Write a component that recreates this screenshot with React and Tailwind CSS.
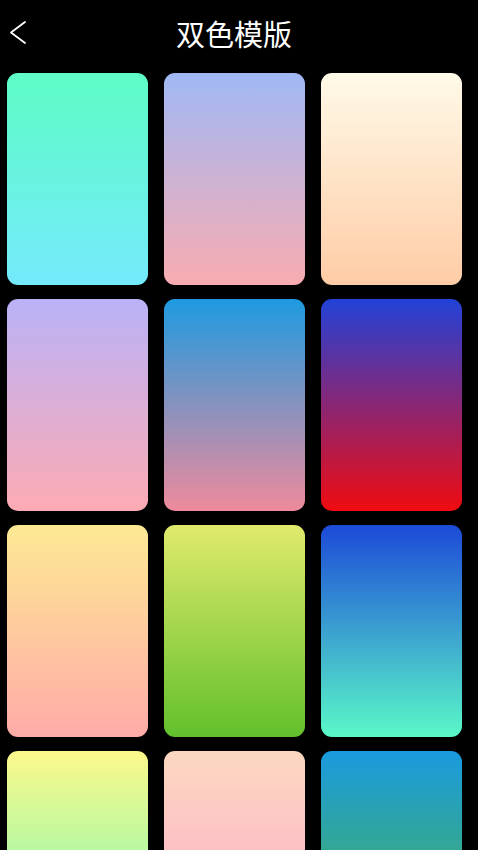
const cards = [
  "bg-[linear-gradient(to_bottom,#5efdc6,#74e9fb)]",
  "bg-[linear-gradient(to_bottom,#a0b8f5,#f9acb1)]",
  "bg-[linear-gradient(to_bottom,#fffae8,#ffcca6)]",
  "bg-[linear-gradient(to_bottom,#bab2f8,#fdabb3)]",
  "bg-[linear-gradient(to_bottom,#1e9ae0,#ef8a9c)]",
  "bg-[linear-gradient(to_bottom,#2242d8,#f00b10)]",
  "bg-[linear-gradient(to_bottom,#fde994,#ffaba8)]",
  "bg-[linear-gradient(to_bottom,#e0ea6c,#62c02c)]",
  "bg-[linear-gradient(to_bottom,#1c4ad8,#5af8c8)]",
  "bg-[linear-gradient(to_bottom,#fcf98a,#6ef7bc)]",
  "bg-[linear-gradient(to_bottom,#fcd8c0,#fda6cc)]",
  "bg-[linear-gradient(to_bottom,#1a9adf,#50b640)]",
];

export default function App() {
  return (
    <div className="min-h-screen bg-black font-['Noto_Sans_CJK_SC',sans-serif]">
      <header className="relative h-[66px] flex items-center justify-center">
        <button className="absolute left-[8px] top-[19px] p-0">
          <svg width="20" height="28" viewBox="0 0 20 28" fill="none">
            <path d="M17 3 L3 13.5 L17 24" stroke="white" strokeWidth="1.8" strokeLinecap="round" strokeLinejoin="round" />
          </svg>
        </button>
        <h1 className="text-white text-[29px] leading-none mr-[10px]">双色模版</h1>
      </header>
      <div className="grid grid-cols-[141px_141px_141px] gap-x-[16px] gap-y-[14px] pl-[7px] pt-[7px] pb-4">
        {cards.map((c, i) => (
          <div key={i} className={`h-[212px] rounded-[11px] ${c}`} />
        ))}
      </div>
    </div>
  );
}
